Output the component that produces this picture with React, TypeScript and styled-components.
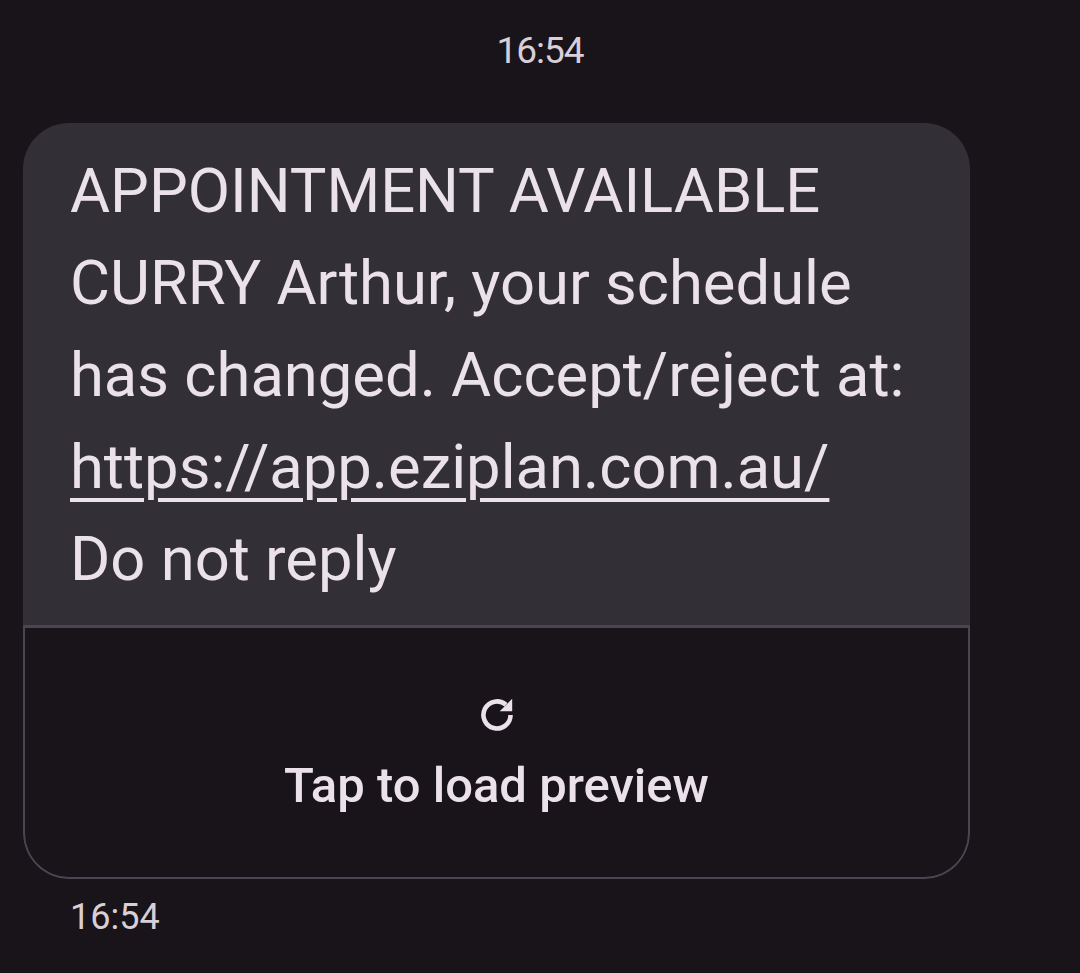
import * as React from 'react'
import styled, { createGlobalStyle } from 'styled-components'

const GlobalStyle = createGlobalStyle`
  html, body {
    margin: 0;
    padding: 0;
    background: #191419;
  }
  body {
    font-family: Roboto, "Open Sans", sans-serif;
    color: #ebe1ea;
  }
`

const RefreshIcon: React.FC = () => (
  <svg width="50" height="50" viewBox="0 0 24 24" fill="none">
    <path
      d="M18.5 12a6.5 6.5 0 1 1-2.2-4.9"
      stroke="#ebe1ea"
      strokeWidth="2.2"
      strokeLinecap="butt"
    />
    <path d="M19.3 4.2v6h-6z" fill="#ebe1ea" />
  </svg>
)

const App: React.FC = () => (
  <>
    <GlobalStyle />
    <Screen>
      <TopTime>16:54</TopTime>
      <Bubble>
        <Body>
          <Line>APPOINTMENT AVAILABLE</Line>
          <Line>CURRY Arthur, your schedule</Line>
          <Line>has changed. Accept/reject at:</Line>
          <Line>
            <Link>https://app.eziplan.com.au/</Link>
          </Line>
          <Line>Do not reply</Line>
        </Body>
        <Preview>
          <RefreshIcon />
          <PreviewLabel>Tap to load preview</PreviewLabel>
        </Preview>
      </Bubble>
      <Stamp>16:54</Stamp>
    </Screen>
  </>
)

export default App

// Styles
const Screen = styled.div`
  width: 1080px;
  height: 973px;
  background: #191419;
  display: flex;
  flex-direction: column;
  overflow: hidden;
`

const TopTime = styled.div`
  text-align: center;
  font-size: 37px;
  letter-spacing: -1px;
  color: #d9cfd8;
  padding-top: 29px;
  height: 123px;
  box-sizing: border-box;
`

const Bubble = styled.div`
  margin-left: 23px;
  width: 947px;
  border-radius: 46px;
  overflow: hidden;
  display: flex;
  flex-direction: column;
`

const Body = styled.div`
  background: #332f36;
  padding: 22px 0 20px 47px;
  border-bottom: 3px solid #4a4550;
`

const Line = styled.div`
  font-size: 61.5px;
  line-height: 92px;
  white-space: nowrap;
`

const Link = styled.span`
  text-decoration: underline;
  text-decoration-thickness: 4px;
  text-underline-offset: 10px;
`

const Preview = styled.div`
  height: 251px;
  box-sizing: border-box;
  border: 2px solid #4a4550;
  border-top: none;
  border-radius: 0 0 46px 46px;
  display: flex;
  flex-direction: column;
  align-items: center;
  padding-top: 62px;
  gap: 17px;
`

const PreviewLabel = styled.div`
  font-size: 49px;
  font-weight: 500;
`

const Stamp = styled.div`
  font-size: 36px;
  color: #d9cfd8;
  padding: 17px 0 0 70px;
`
